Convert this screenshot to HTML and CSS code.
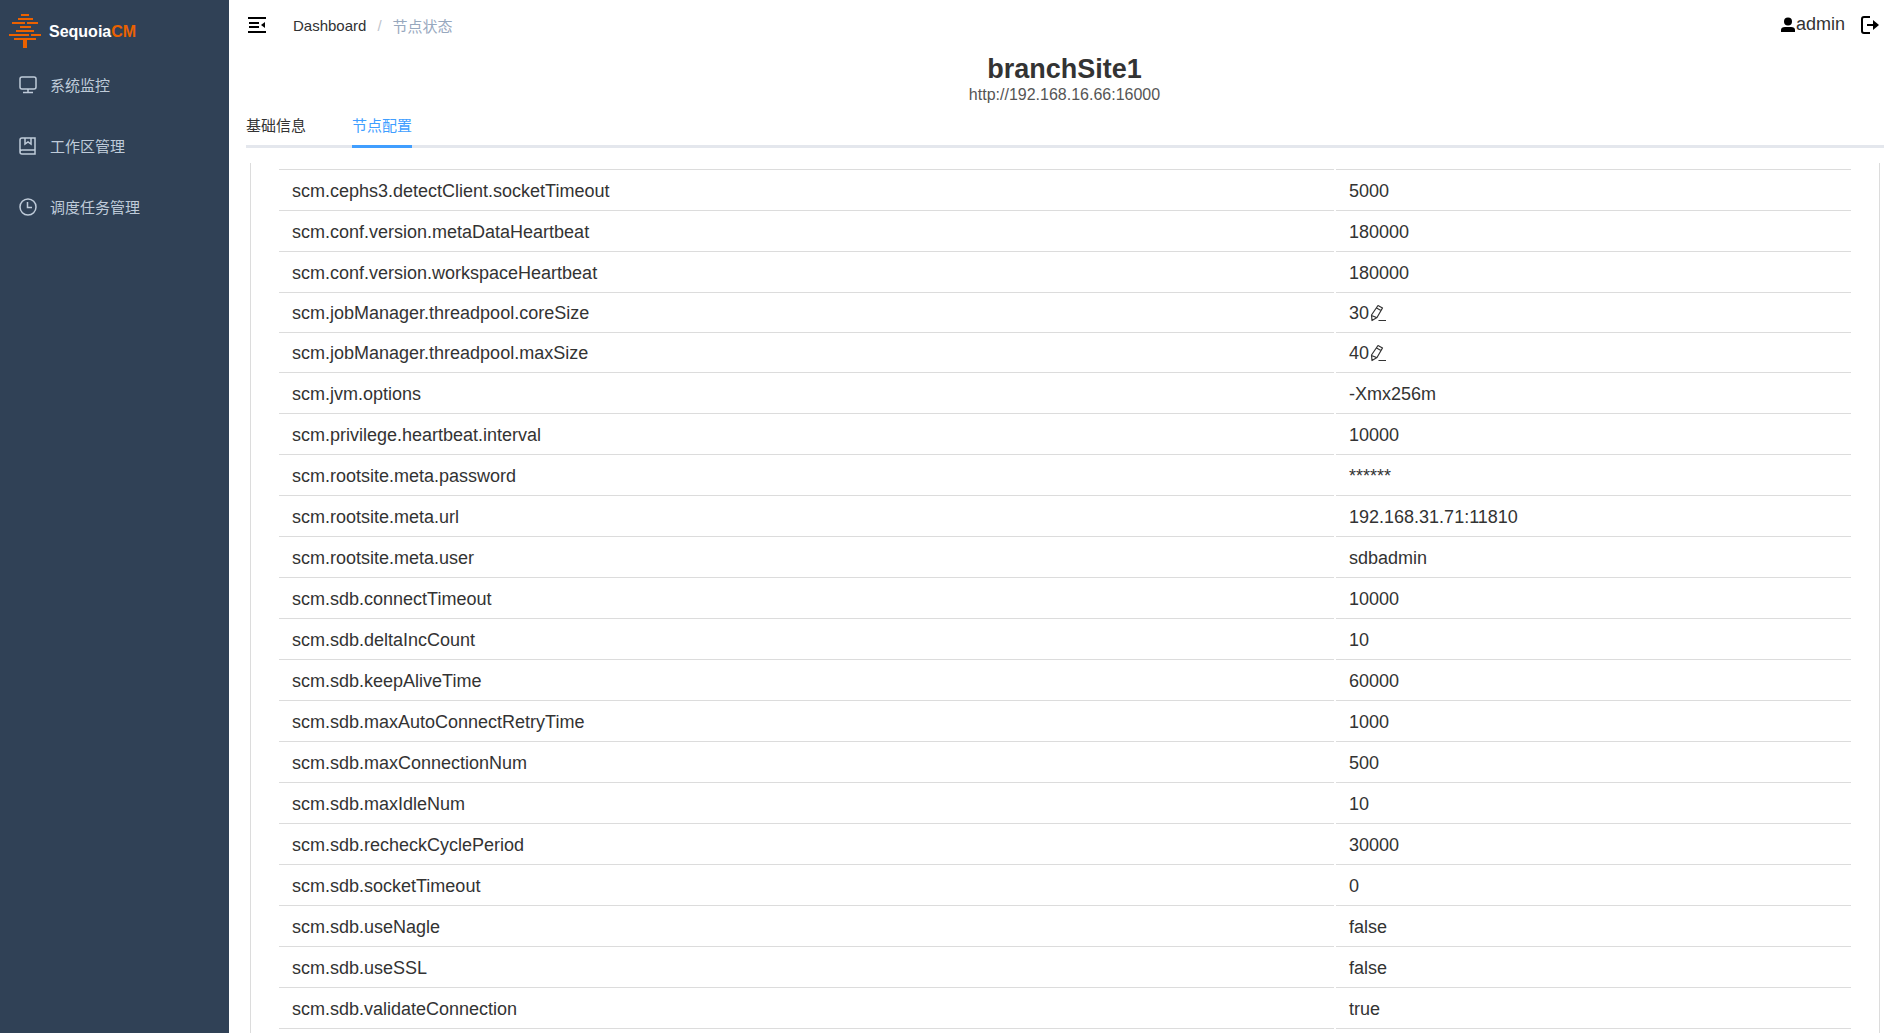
FILE: index.html
```html
<!DOCTYPE html>
<html lang="zh-CN">
<head>
<meta charset="utf-8">
<title>SequoiaCM</title>
<link rel="stylesheet" href="styles.css">
</head>
<body>
<svg class="defs" aria-hidden="true">
  <symbol id="edit" viewBox="0 0 16 18">
    <g fill="none" stroke="currentColor" stroke-width="1.2" stroke-linejoin="round">
      <path d="M8 1.500l4.500 2.500-5.500 9.500-5 3-.5-5.500zM6.500 4l4.500 2.500M1.500 11.500l5 2M8.500 16.500h7.500"/>
    </g>
  </symbol>
</svg>
<div class="app">
  <aside class="sidebar">
    <a class="logo" href="#">
      <svg width="34" height="34" viewBox="0 0 34 34" fill="#eb6100" aria-hidden="true">
        <path d="M13 0h8v2h-8zM10 4h15v2H10zM4 8h13v2H4zM19 8h11v2H19zM12 12h11v2H12zM8 16h18v2H8zM1 20h20v2H1zM23 20h10v2H23zM6 24h22v2h-9v8h-4v-8H6z"/>
      </svg>
      <span>Sequoia<b>CM</b></span>
    </a>
    <nav class="menu">
      <a href="#"><svg viewBox="0 0 20 20" aria-hidden="true"><path d="M4 2h12q2 0 2 2v8q0 2-2 2H4q-2 0-2-2V4q0-2 2-2zM10 14v3M5 17.500h10"/></svg>系统监控</a>
      <a href="#"><svg viewBox="0 0 20 20" aria-hidden="true"><path d="M4 2h13v16H4q-2 0-2-2V4q0-2 2-2zM2 16q0-2 2-2h13M7 2v6l3-2 3 2V2"/></svg>工作区管理</a>
      <a href="#"><svg viewBox="0 0 20 20" aria-hidden="true"><circle cx="10" cy="10" r="8"/><path d="M9.500 5v5.500H14"/></svg>调度任务管理</a>
    </nav>
  </aside>
  <main class="main">
    <header class="navbar">
      <button class="icon-button" type="button" aria-label="Toggle menu">
        <svg width="18" height="18" viewBox="0 0 18 18" aria-hidden="true"><path d="M0 2h18M1 7h10M1 11h10M0 16h18" stroke="#000" stroke-width="2"/><path d="M17 6v6l-4-3z"/></svg>
      </button>
      <nav class="breadcrumb"><a href="#">Dashboard</a><span class="slash">/</span><span>节点状态</span></nav>
      <div class="user">
        <svg width="14" height="16" viewBox="0 0 14 16" aria-hidden="true"><circle cx="7" cy="4.500" r="4"/><path d="M0 15v-2q0-3 4-3h6q4 0 4 3v2z"/></svg>
        <span>admin</span>
      </div>
      <button class="icon-button" type="button" aria-label="Log out">
        <svg width="18" height="18" viewBox="0 0 18 18" aria-hidden="true"><path d="M9 1H3Q1 1 1 3v12q0 2 2 2h6M6 9h9" fill="none" stroke="#000" stroke-width="2"/><path d="M12 4l6 5-6 5z"/></svg>
      </button>
    </header>
    <div class="heading">
      <h1>branchSite1</h1>
      <p>http://192.168.16.66:16000</p>
    </div>
    <div class="tabs" role="tablist">
      <button type="button" role="tab" aria-selected="false">基础信息</button>
      <button type="button" role="tab" aria-selected="true">节点配置</button>
    </div>
    <section class="panel">
      <table class="config">
        <colgroup><col class="col-key"><col></colgroup>
        <tbody>
          <tr><td>scm.cephs3.detectClient.socketTimeout</td><td>5000</td></tr>
          <tr><td>scm.conf.version.metaDataHeartbeat</td><td>180000</td></tr>
          <tr><td>scm.conf.version.workspaceHeartbeat</td><td>180000</td></tr>
          <tr class="editable"><td>scm.jobManager.threadpool.coreSize</td><td>30<button type="button" aria-label="Edit coreSize"><svg><use href="#edit"/></svg></button></td></tr>
          <tr class="editable"><td>scm.jobManager.threadpool.maxSize</td><td>40<button type="button" aria-label="Edit maxSize"><svg><use href="#edit"/></svg></button></td></tr>
          <tr><td>scm.jvm.options</td><td>-Xmx256m</td></tr>
          <tr><td>scm.privilege.heartbeat.interval</td><td>10000</td></tr>
          <tr><td>scm.rootsite.meta.password</td><td>******</td></tr>
          <tr><td>scm.rootsite.meta.url</td><td>192.168.31.71:11810</td></tr>
          <tr><td>scm.rootsite.meta.user</td><td>sdbadmin</td></tr>
          <tr><td>scm.sdb.connectTimeout</td><td>10000</td></tr>
          <tr><td>scm.sdb.deltaIncCount</td><td>10</td></tr>
          <tr><td>scm.sdb.keepAliveTime</td><td>60000</td></tr>
          <tr><td>scm.sdb.maxAutoConnectRetryTime</td><td>1000</td></tr>
          <tr><td>scm.sdb.maxConnectionNum</td><td>500</td></tr>
          <tr><td>scm.sdb.maxIdleNum</td><td>10</td></tr>
          <tr><td>scm.sdb.recheckCyclePeriod</td><td>30000</td></tr>
          <tr><td>scm.sdb.socketTimeout</td><td>0</td></tr>
          <tr><td>scm.sdb.useNagle</td><td>false</td></tr>
          <tr><td>scm.sdb.useSSL</td><td>false</td></tr>
          <tr><td>scm.sdb.validateConnection</td><td>true</td></tr>
        </tbody>
      </table>
    </section>
  </main>
</div>
</body>
</html>
```
FILE: styles.css
```css
* { box-sizing: border-box; }
body {
  margin: 0;
  color: #333;
  font-family: "Liberation Sans", "Noto Sans CJK SC", sans-serif;
  font-size: 15px;
}
a { color: inherit; text-decoration: none; }
button {
  padding: 0;
  border: 0;
  background: none;
  color: inherit;
  font: inherit;
  cursor: pointer;
}
svg { display: block; flex: none; }
.defs { display: none; }

.app { display: flex; height: 100vh; overflow: hidden; }

.sidebar { flex: none; width: 229px; background: #304156; }
.logo {
  display: flex;
  align-items: center;
  gap: 7px;
  height: 54px;
  padding: 8px 8px 0;
  color: #fff;
  font-size: 16px;
  font-weight: bold;
}
.logo span { padding-top: 2px; }
.logo b { color: #eb6100; }
.menu a {
  display: flex;
  align-items: center;
  gap: 12px;
  height: 61px;
  padding-left: 18px;
  color: #bfcbd9;
}
.menu svg {
  width: 20px;
  height: 20px;
  fill: none;
  stroke: currentColor;
  stroke-width: 1.5;
}

.main { display: flex; flex: 1; flex-direction: column; min-width: 0; }
.navbar {
  display: flex;
  align-items: center;
  height: 50px;
  padding: 0 21px 1px 19px;
}
.breadcrumb {
  display: flex;
  flex: 1;
  align-items: center;
  padding: 1px 0 0 27px;
  color: #97a8be;
}
.breadcrumb a { color: #303133; }
.slash { margin: 0 11px; color: #c0c4cc; }
.user {
  display: flex;
  align-items: center;
  gap: 1px;
  margin-right: 16px;
  font-size: 18px;
}

.heading { text-align: center; }
h1 { margin: 0 0 1px; padding-top: 4px; font-size: 27px; line-height: 31px; }
.heading p { margin: 0; color: #555; font-size: 16px; line-height: 18px; }

.tabs {
  display: flex;
  gap: 46px;
  height: 44px;
  margin: 0 16px 0 17px;
  box-shadow: inset 0 -3px #e4e7ed;
}
.tabs button { border-bottom: 3px solid transparent; }
.tabs button[aria-selected="true"] { border-color: #409eff; color: #409eff; }

.panel {
  flex: 1;
  min-height: 0;
  margin: 15px 20px 0 21px;
  padding: 6px 26px 0;
  overflow: hidden;
  border: solid #dcdcdc;
  border-width: 0 1px;
}
.config {
  width: 100%;
  table-layout: fixed;
  border-spacing: 2px 0;
  font-size: 18px;
  line-height: 20px;
}
.col-key { width: 67.2%; }
.config td { height: 41px; padding: 2px 13px 0; border-bottom: 1px solid #dcdcdc; }
.config .editable td { height: 40px; padding-top: 0; }
.config tr:first-child td { height: 42px; border-top: 1px solid #dcdcdc; }
.config button { display: inline-block; margin-left: 1px; vertical-align: -3px; }
.config svg { width: 16px; height: 18px; }
```
